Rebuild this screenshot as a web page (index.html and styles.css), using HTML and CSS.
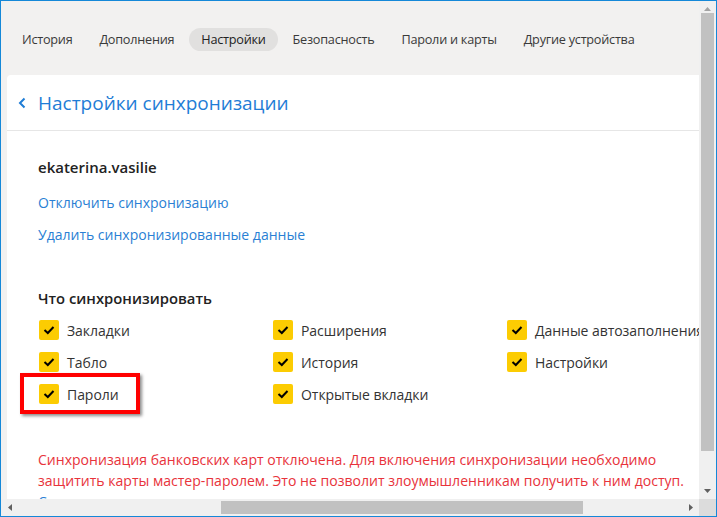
FILE: index.html
```html
<!DOCTYPE html>
<html lang="ru">
<head>
<meta charset="utf-8">
<title>Настройки синхронизации</title>
<link rel="stylesheet" href="styles.css">
</head>
<body>
<div class="window">
  <div class="viewport">
    <nav class="tabs">
      <span class="tab">История</span>
      <span class="tab">Дополнения</span>
      <span class="tab tab-active">Настройки</span>
      <span class="tab">Безопасность</span>
      <span class="tab">Пароли и карты</span>
      <span class="tab">Другие устройства</span>
    </nav>
    <section class="panel">
      <header class="panel-head">
        <svg class="back" width="8" height="12" viewBox="0 0 8 12"><polyline points="6.5,1.5 2,6 6.5,10.5" fill="none" stroke="#1f7dd6" stroke-width="2"/></svg>
        <h1 class="title">Настройки синхронизации</h1>
      </header>
      <div class="panel-body">
        <div class="account">ekaterina.vasilie</div>
        <a class="link link-first">Отключить синхронизацию</a>
        <a class="link">Удалить синхронизированные данные</a>
        <h2 class="section-title">Что синхронизировать</h2>
        <div class="options">
          <label class="option"><span class="check"><svg width="20" height="20" viewBox="0 0 20 20"><polyline points="5.5,10 8.8,13 14.5,7" fill="none" stroke="#000" stroke-width="2"/></svg></span>Закладки</label>
          <label class="option"><span class="check"><svg width="20" height="20" viewBox="0 0 20 20"><polyline points="5.5,10 8.8,13 14.5,7" fill="none" stroke="#000" stroke-width="2"/></svg></span>Расширения</label>
          <label class="option"><span class="check"><svg width="20" height="20" viewBox="0 0 20 20"><polyline points="5.5,10 8.8,13 14.5,7" fill="none" stroke="#000" stroke-width="2"/></svg></span>Данные автозаполнения</label>
          <label class="option"><span class="check"><svg width="20" height="20" viewBox="0 0 20 20"><polyline points="5.5,10 8.8,13 14.5,7" fill="none" stroke="#000" stroke-width="2"/></svg></span>Табло</label>
          <label class="option"><span class="check"><svg width="20" height="20" viewBox="0 0 20 20"><polyline points="5.5,10 8.8,13 14.5,7" fill="none" stroke="#000" stroke-width="2"/></svg></span>История</label>
          <label class="option"><span class="check"><svg width="20" height="20" viewBox="0 0 20 20"><polyline points="5.5,10 8.8,13 14.5,7" fill="none" stroke="#000" stroke-width="2"/></svg></span>Настройки</label>
          <label class="option option-marked"><span class="check"><svg width="20" height="20" viewBox="0 0 20 20"><polyline points="5.5,10 8.8,13 14.5,7" fill="none" stroke="#000" stroke-width="2"/></svg></span>Пароли<span class="highlight"></span></label>
          <label class="option"><span class="check"><svg width="20" height="20" viewBox="0 0 20 20"><polyline points="5.5,10 8.8,13 14.5,7" fill="none" stroke="#000" stroke-width="2"/></svg></span>Открытые вкладки</label>
        </div>
        <p class="warning">Синхронизация банковских карт отключена. Для включения синхронизации необходимо защитить карты мастер-паролем. Это не позволит злоумышленникам получить к ним доступ.</p>
        <a class="link link-tail">Создать мастер-пароль</a>
      </div>
    </section>
  </div>
  <div class="vscroll">
    <div class="vbtn vbtn-up"><svg width="7" height="4" viewBox="0 0 7 4"><polygon points="0,4 7,4 3.5,0" fill="#a3a3a3"/></svg></div>
    <div class="vthumb"></div>
    <div class="vspace"></div>
    <div class="vbtn vbtn-down"><svg width="7" height="4" viewBox="0 0 7 4"><polygon points="0,0 7,0 3.5,4" fill="#606060"/></svg></div>
  </div>
  <div class="hscroll">
    <div class="hbtn"><svg width="4" height="7" viewBox="0 0 4 7"><polygon points="4,0 4,7 0,3.5" fill="#606060"/></svg></div>
    <div class="hlead"></div>
    <div class="hthumb"></div>
    <div class="hspace"></div>
    <div class="hbtn"><svg width="4" height="7" viewBox="0 0 4 7"><polygon points="0,0 0,7 4,3.5" fill="#606060"/></svg></div>
  </div>
  <div class="corner"></div>
</div>
</body>
</html>
```
FILE: styles.css
```css
html, body {
  margin: 0;
  padding: 0;
  overflow: hidden;
}

body {
  font-family: "Open Sans", "Noto Sans", "Liberation Sans", sans-serif;
  color: #333;
}

.window {
  box-sizing: border-box;
  width: 717px;
  height: 517px;
  border: 1px solid #1588d8;
  display: grid;
  grid-template-columns: 1fr 17px;
  grid-template-rows: 1fr 17px;
  background: #f2f1f0;
}

.viewport {
  overflow: hidden;
  background: #f2f1f0;
  min-width: 0;
  min-height: 0;
}

/* Tabs */
.tabs {
  display: flex;
  gap: 3px;
  padding: 27px 0 0 9px;
  white-space: nowrap;
}

.tab {
  height: 23px;
  line-height: 23px;
  padding: 0 12px;
  font-size: 12.7px;
  letter-spacing: -0.25px;
  color: #3a3a3a;
  border-radius: 12px;
}

.tab-active {
  background: #e1e0df;
  color: #222;
}

/* Panel */
.panel {
  margin: 24px 0 0 6px;
  width: 800px;
  background: #fff;
  border-radius: 4px 0 0 0;
  height: 460px;
}

.panel-head {
  height: 55px;
  border-bottom: 1px solid #e6e6e6;
  display: flex;
  align-items: center;
  padding-left: 11px;
  gap: 12px;
}

.back {
  flex: none;
  margin-top: 1px;
}

.title {
  margin: 0;
  font-size: 19px;
  font-weight: 400;
  color: #1f7dd6;
  line-height: 26px;
}

.panel-body {
  padding: 26px 0 0 31px;
}

.account {
  font-size: 15px;
  font-weight: 600;
  color: #222;
  line-height: 20px;
}

.link {
  display: block;
  font-size: 14px;
  line-height: 20px;
  color: #2a7fd4;
  margin-top: 12px;
  white-space: nowrap;
}

.link-first {
  margin-top: 16px;
}

.link-tail {
  margin-top: 1px;
}

.section-title {
  margin: 43px 0 0;
  font-size: 14.8px;
  font-weight: 600;
  color: #222;
  line-height: 20px;
}

.options {
  display: grid;
  grid-template-columns: 234px 234px 234px;
  row-gap: 12px;
  margin-top: 12px;
  padding-left: 1px;
}

.option {
  display: flex;
  align-items: center;
  gap: 8px;
  height: 20px;
  font-size: 14px;
  letter-spacing: -0.05px;
  color: #333;
  white-space: nowrap;
  position: relative;
}

.check {
  flex: none;
  width: 20px;
  height: 20px;
  border-radius: 2px;
  background: #fccc02;
  display: block;
}

.check svg {
  display: block;
}

.highlight {
  position: absolute;
  left: -19px;
  top: -11px;
  width: 120px;
  height: 41px;
  box-sizing: border-box;
  border: 4px solid #ff0000;
  box-shadow: 2px 2px 3px rgba(0, 0, 0, 0.45);
}

.warning {
  margin: 45px 0 0;
  width: 665px;
  font-size: 14.05px;
  line-height: 21px;
  color: #e8333b;
}

/* Scrollbars */
.vscroll {
  background: #f0f0f0;
  display: flex;
  flex-direction: column;
}

.vbtn {
  display: flex;
  align-items: center;
  justify-content: center;
  flex: none;
}

.vbtn-up {
  height: 10px;
  align-items: flex-end;
}

.vbtn-down {
  height: 17px;
}

.vthumb {
  flex: none;
  height: 438px;
  margin: 2px 2px 0 2px;
  background: #c1c1c1;
}

.vspace {
  flex: 1;
}

.hscroll {
  background: #f0f0f0;
  display: flex;
  align-items: stretch;
}

.hbtn {
  flex: none;
  width: 17px;
  display: flex;
  align-items: center;
  justify-content: center;
}

.hlead {
  flex: none;
  width: 203px;
}

.hthumb {
  flex: none;
  width: 362px;
  margin: 2px 0;
  background: #c1c1c1;
}

.hspace {
  flex: 1;
}

.corner {
  background: #dcdcdc;
}
```
